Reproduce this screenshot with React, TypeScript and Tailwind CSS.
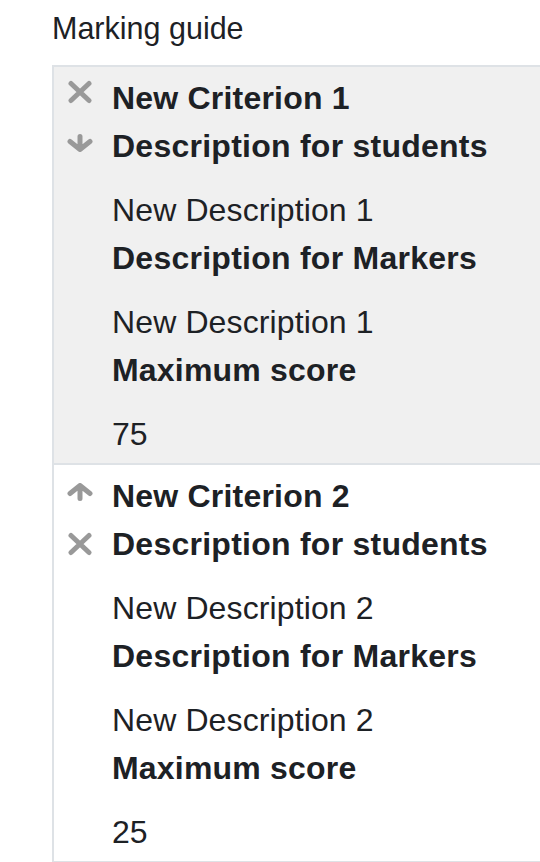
import React from "react";

const XIcon = () => (
  <svg width="26" height="24" viewBox="0 0 26 24" className="block">
    <path d="M4 3.5 L22 20.5 M22 3.5 L4 20.5" stroke="#999999" strokeWidth="5" strokeLinecap="round" fill="none" />
  </svg>
);

const DownIcon = () => (
  <svg width="26" height="18" viewBox="0 0 26 18" className="block">
    <path d="M13 2.5 L13 14.5 M3 7.5 L13 15.5 L23 7.5" stroke="#999999" strokeWidth="5" strokeLinecap="round" strokeLinejoin="round" fill="none" />
  </svg>
);

const UpIcon = () => (
  <svg width="26" height="18" viewBox="0 0 26 18" className="block">
    <path d="M13 15.5 L13 3.5 M3 10.5 L13 2.5 L23 10.5" stroke="#999999" strokeWidth="5" strokeLinecap="round" strokeLinejoin="round" fill="none" />
  </svg>
);

type Crit = {
  name: string;
  desc: string;
  markers: string;
  score: string;
  first: React.ReactNode;
  second: React.ReactNode;
  bg: string;
};

function Row({ c, last }: { c: Crit; last?: boolean }) {
  return (
    <div className={`flex pt-[7px] pb-[5px] ${c.bg} ${last ? "" : "border-b-2 border-[#dee2e6]"}`}>
      <div className="w-[58px] shrink-0 flex flex-col pl-[13px]">
        <div className="h-[48px]">{c.first}</div>
        <div className="h-[48px]">{c.second}</div>
      </div>
      <div className="flex flex-col text-[32px] leading-[48px] text-[#1d2125]">
        <div className="font-bold whitespace-nowrap tracking-[0.2px]">{c.name}</div>
        <div className="font-bold whitespace-nowrap tracking-[0.25px]">Description for students</div>
        <div className="mt-[16px] whitespace-nowrap tracking-[0.12px]">{c.desc}</div>
        <div className="font-bold whitespace-nowrap tracking-[0.25px]">Description for Markers</div>
        <div className="mt-[16px] whitespace-nowrap tracking-[0.12px]">{c.markers}</div>
        <div className="font-bold whitespace-nowrap tracking-[0.2px]">Maximum score</div>
        <div className="mt-[16px] whitespace-nowrap">{c.score}</div>
      </div>
    </div>
  );
}

export default function App() {
  const crits: Crit[] = [
    {
      name: "New Criterion 1",
      desc: "New Description 1",
      markers: "New Description 1",
      score: "75",
      first: (
        <div className="pt-[6px]">
          <XIcon />
        </div>
      ),
      second: (
        <div className="pt-[12px]">
          <DownIcon />
        </div>
      ),
      bg: "bg-[#f0f0f0]",
    },
    {
      name: "New Criterion 2",
      desc: "New Description 2",
      markers: "New Description 2",
      score: "25",
      first: (
        <div className="pt-[11px]">
          <UpIcon />
        </div>
      ),
      second: (
        <div className="pt-[12px]">
          <XIcon />
        </div>
      ),
      bg: "bg-white",
    },
  ];
  return (
    <div
      className="w-[540px] h-[862px] overflow-hidden bg-white pl-[52px]"
      style={{ fontFamily: '"Liberation Sans", Arial, sans-serif' }}
    >
      <div className="pt-[6px] pb-[14px] text-[30.5px] leading-[45px] text-[#1d2125] whitespace-nowrap">Marking guide</div>
      <div className="w-[520px] border-2 border-r-0 border-[#dee2e6]">
        {crits.map((c, i) => (
          <Row key={i} c={c} last={i === crits.length - 1} />
        ))}
      </div>
    </div>
  );
}
